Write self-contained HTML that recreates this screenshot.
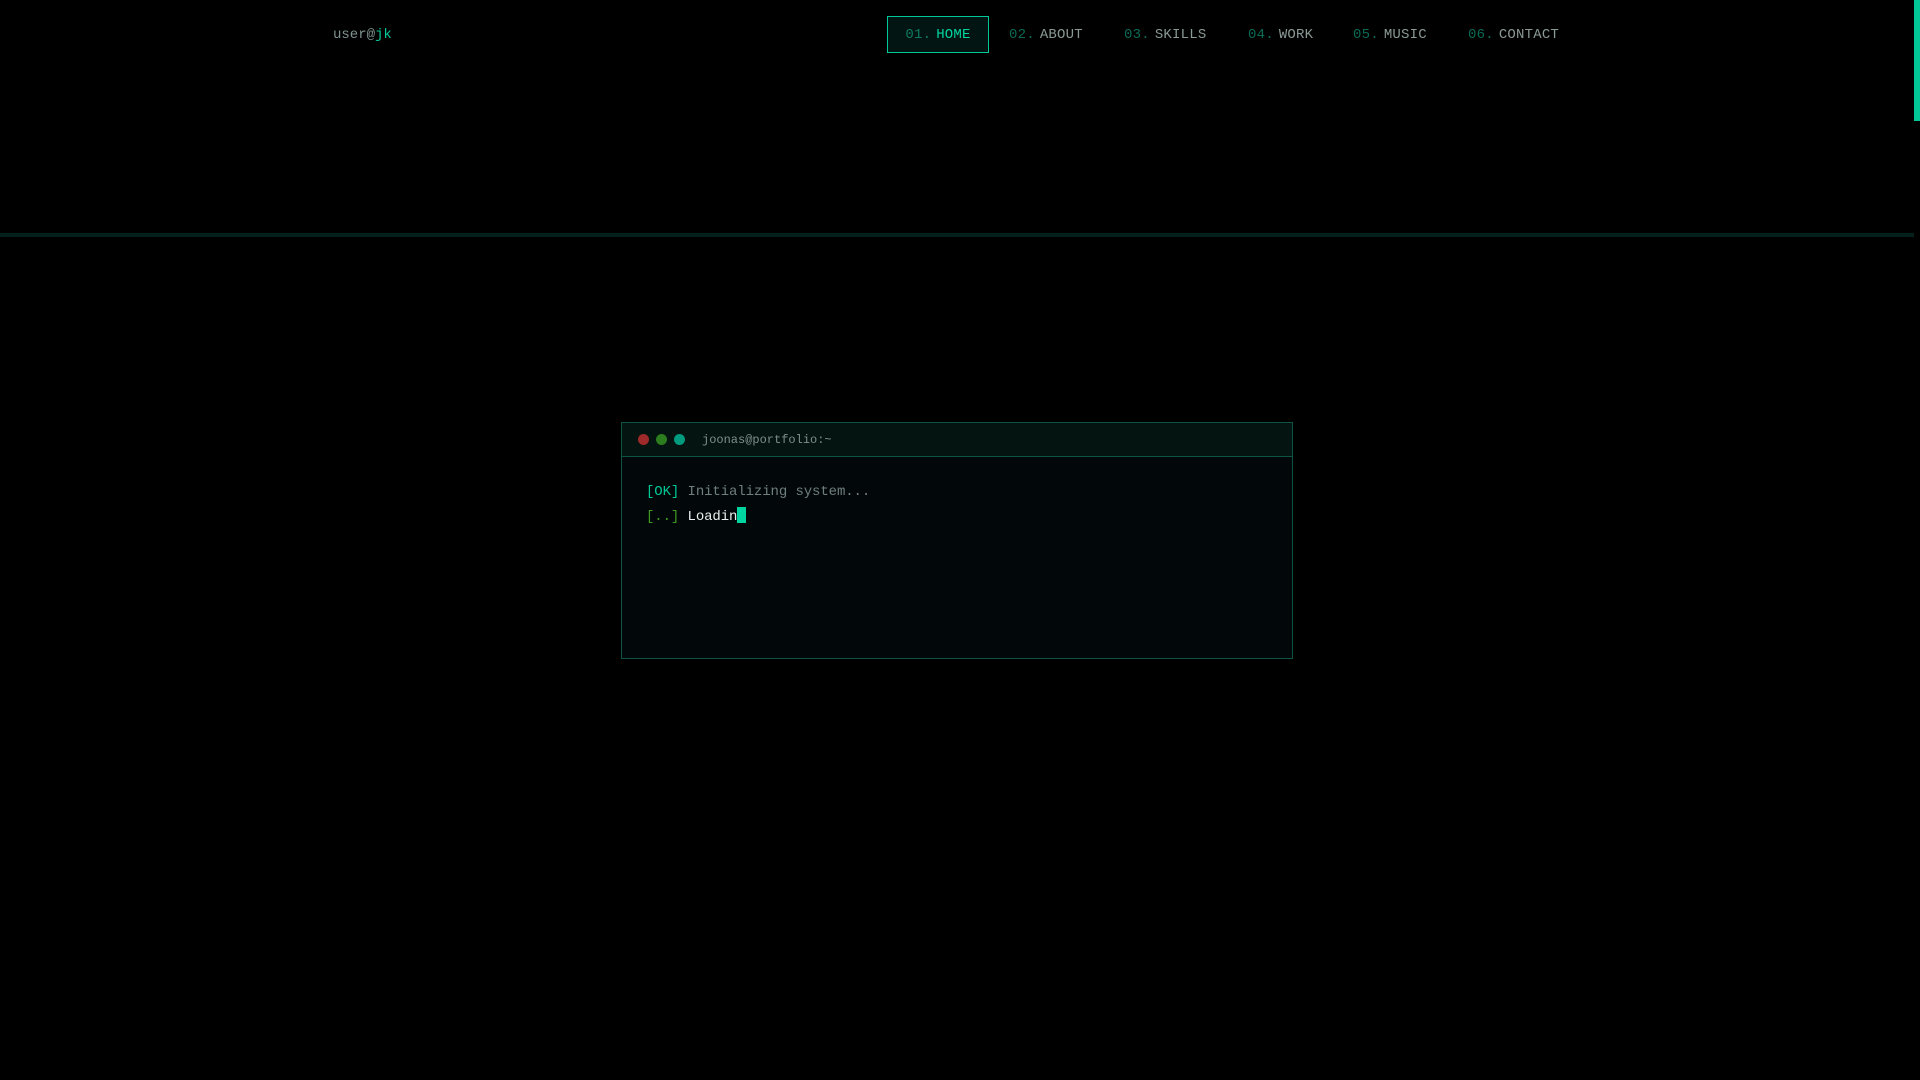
<!DOCTYPE html>
<html><head><meta charset="utf-8"><style>
*{margin:0;padding:0;box-sizing:border-box}
body{width:1920px;height:1080px;background:#000;overflow:hidden;position:relative;font-family:"Liberation Mono",monospace}
.logo{position:absolute;left:333px;top:26px;font-size:14px;color:#7f9490;line-height:18px}
.logo b{font-weight:normal;color:#00c896}
.nav{position:absolute;top:18px;height:37px;font-size:14px;line-height:35px;color:#8a9a96;white-space:nowrap;letter-spacing:0.2px}
.nav i{font-style:normal;color:#0b6a55;margin-right:5px}
.home{top:16px;padding-top:1px;left:887px;width:102px;border:1px solid #00c896;background:#021512;color:#00d4a0;text-align:center}
.home i{color:#0e7a62}
.line{position:absolute;left:0;top:233px;width:1914px;height:4px;background:#03201b}
.sb{position:absolute;right:0;top:0;width:6px;height:121px;background:#00c896}
.term{position:absolute;left:621px;top:422px;width:672px;height:237px;border:1px solid #0b5443;background:#02080a}
.hd{height:34px;background:#031411;border-bottom:1px solid #0b5443;position:relative}
.dot{position:absolute;top:11px;width:11px;height:11px;border-radius:50%}
.t{position:absolute;left:80px;top:10px;font-size:12px;color:#7f8f8b}
.ln{position:absolute;left:24px;font-size:14px;line-height:18px;color:#6f7f7b;white-space:pre;letter-spacing:-0.1px}
.cur{display:inline-block;width:9px;height:16px;background:#00d4a0;vertical-align:-3px}
</style></head><body>
<div class="logo">user@<b>jk</b></div>
<div class="nav home"><i>01.</i>HOME</div>
<div class="nav" style="left:1009px"><i>02.</i>ABOUT</div>
<div class="nav" style="left:1124px"><i>03.</i>SKILLS</div>
<div class="nav" style="left:1248px"><i>04.</i>WORK</div>
<div class="nav" style="left:1353px"><i>05.</i>MUSIC</div>
<div class="nav" style="left:1468px"><i>06.</i>CONTACT</div>
<div class="line"></div>
<div class="sb"></div>
<div class="term">
<div class="hd">
<div class="dot" style="left:16px;background:#9e2a2a"></div>
<div class="dot" style="left:34px;background:#2c7d1e"></div>
<div class="dot" style="left:52px;background:#009a7e"></div>
<div class="t">joonas@portfolio:~</div>
</div>
<div class="ln" style="top:60px"><span style="color:#00c896">[OK]</span> Initializing system...</div>
<div class="ln" style="top:84px"><span style="color:#3c9a1e">[..]</span> <span style="color:#e8efed">Loadin</span><span class="cur"></span></div>
</div>
</body></html>
